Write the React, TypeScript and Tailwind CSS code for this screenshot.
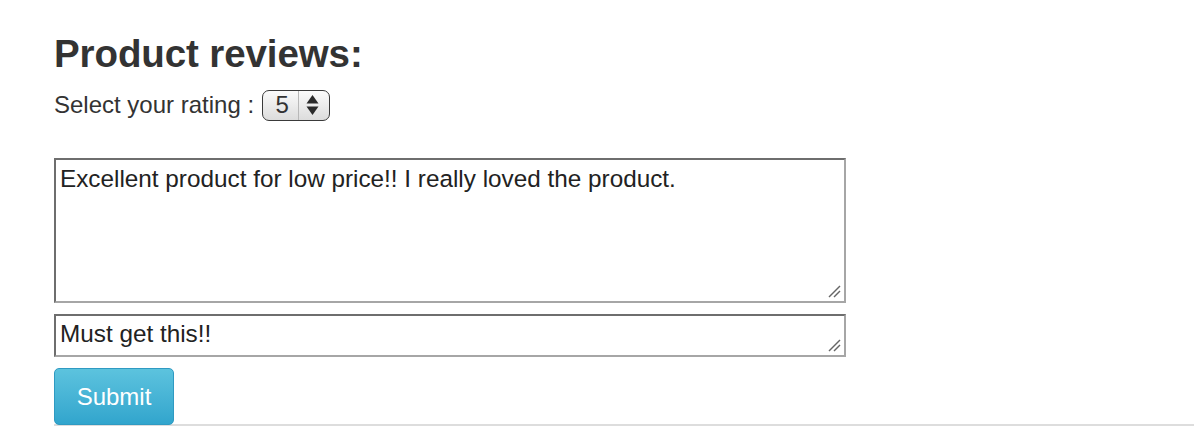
import React from "react";

function Resize() {
  return (
    <svg className="absolute right-[3px] bottom-[3px]" width="13" height="13" viewBox="0 0 13 13">
      <line x1="1" y1="12" x2="12" y2="1" stroke="#666" strokeWidth="1.5" />
      <line x1="6" y1="12" x2="12" y2="6" stroke="#666" strokeWidth="1.5" />
    </svg>
  );
}

export default function App() {
  return (
    <div className="w-[1194px] h-[428px] overflow-hidden bg-white text-[#333] font-['Liberation_Sans',Arial,sans-serif]">
      <div className="pl-[54px] pt-[30px]">
        <h1 className="text-[38.5px] leading-[48px] font-bold tracking-[-0.1px]">Product reviews:</h1>
        <div className="mt-[11px] flex items-center h-[32px] text-[24px]">
          <span>Select your rating :&nbsp;</span>
          <div className="ml-[1px] flex items-center w-[68px] h-[31px] rounded-[7px] border-[1.5px] border-[#3a3a3a] bg-gradient-to-b from-[#fbfbfb] to-[#dcdcdc]">
            <span className="w-[35px] pl-[4px] text-center text-[24px] leading-none">5</span>
            <div className="w-px h-full bg-[#b8b8b8]" />
            <svg className="ml-[7px]" width="13" height="22" viewBox="0 0 13 22">
              <polygon points="6.5,1 12.5,9.5 0.5,9.5" fill="#2a2a2a" />
              <polygon points="6.5,21 12.5,12.5 0.5,12.5" fill="#2a2a2a" />
            </svg>
          </div>
        </div>
        <div className="mt-[37px] relative w-[792px] h-[145px] border-2 border-t-[#6e6e6e] border-l-[#6e6e6e] border-r-[#a6a6a6] border-b-[#a6a6a6] px-[4px] pt-[5px] text-[24.3px] leading-[28px] text-[#222]">
          Excellent product for low price!! I really loved the product.
          <Resize />
        </div>
        <div className="mt-[11px] relative w-[792px] h-[43px] border-2 border-t-[#6e6e6e] border-l-[#6e6e6e] border-r-[#a6a6a6] border-b-[#a6a6a6] px-[4px] pt-[4px] text-[24.3px] leading-[28px] text-[#222]">
          Must get this!!
          <Resize />
        </div>
        <button className="mt-[11px] w-[120px] h-[57px] rounded-[5px] border border-[#2f9ac2] bg-gradient-to-b from-[#5cc3de] to-[#31a5cd] text-white text-[24px] leading-none">
          Submit
        </button>
        <div className="h-[2px] bg-[#dddddd] -mt-[1px] w-[1200px]" />
      </div>
    </div>
  );
}
